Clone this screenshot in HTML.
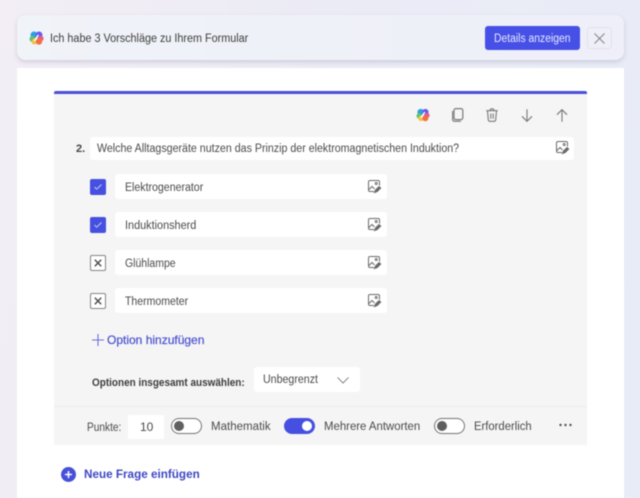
<!DOCTYPE html>
<html lang="de">
<head>
<meta charset="utf-8">
<title>Formular</title>
<style>
html,body{margin:0;padding:0}
body{width:640px;height:498px;overflow:hidden;position:relative;font-family:"Liberation Sans",sans-serif;color:#4a4a4a;background:linear-gradient(100deg,#f3eef5 0%,#ebebf5 45%,#e8ecf7 100%)}
#wrap{position:absolute;inset:0;filter:blur(.4px)}
.a{position:absolute}
.t{position:absolute;white-space:nowrap;font-size:11.5px;line-height:16px;transform-origin:0 50%}
.w{position:absolute;background:#fff;border-radius:3px}
.cb{position:absolute;left:90px;width:16px;height:16px;border-radius:2px;box-sizing:border-box}
.on{background:#4650e0}
.off{background:#fff;border:1px solid #858585}
.tg{position:absolute;width:31px;height:16px;border-radius:8px;box-sizing:border-box;border:1px solid #757575;background:#fff}
.tg i{position:absolute;left:2px;top:2px;width:10px;height:10px;border-radius:50%;background:#5f5f5f}
.tg.y{background:#4650e0;border-color:#4650e0}
.tg.y i{left:17px;background:#fff}
svg{position:absolute;overflow:visible}
</style>
</head>
<body>
<div id="wrap">
<div class="a" style="left:17px;top:15px;width:607px;height:45px;border-radius:9px;background:linear-gradient(90deg,#f0f3f8,#eeeff8);box-shadow:0 2px 5px rgba(90,90,130,.22)"></div>
<div class="a" style="left:17px;top:68px;width:607px;height:430px;background:#fff"></div>
<div class="a" style="left:54px;top:91px;width:533px;height:354px;background:#f5f5f5"></div>
<div class="a" style="left:54px;top:90.5px;width:533px;height:3px;background:#4a50d8;border-radius:2px 2px 0 0"></div>
<div class="a" style="left:54px;top:406px;width:533px;height:1px;background:#ebebeb"></div>

<svg style="left:29px;top:31px" width="15" height="14" viewBox="0 0 15 14"><circle cx="5" cy="4" r="3.500" fill="#2aa0e6"/><circle cx="10" cy="4" r="3.500" fill="#6a5ce8"/><circle cx="3.500" cy="8" r="3" fill="#5cc46a"/><circle cx="5.500" cy="10.500" r="3" fill="#f3c04a"/><circle cx="12" cy="7.500" r="2.600" fill="#e85a8a"/><circle cx="10" cy="10.500" r="3.200" fill="#f2703f"/><path d="M5.800 9.500L9 4.500" stroke="#fff" stroke-width="1.600" stroke-linecap="round"/></svg>
<div class="t" style="left:50px;top:31px;color:#3c3c3c;transform:scaleX(.94)">Ich habe 3 Vorschläge zu Ihrem Formular</div>

<div class="a" style="left:485px;top:26px;width:95px;height:24px;background:#4650e6;border-radius:3px"></div>
<div class="t" style="left:494px;top:31px;color:#e8eafc;transform:scaleX(.9)">Details anzeigen</div>
<div class="a" style="left:587px;top:27px;width:25px;height:22px;box-sizing:border-box;border:1px solid #e2e2ea;border-radius:3px"></div>
<svg style="left:594px;top:33px" width="11" height="11" viewBox="0 0 11 11"><path d="M.5.500l10 10M10.500.500l-10 10" stroke="#858585" stroke-width="1" fill="none"/></svg>

<svg style="left:416px;top:108px" width="14" height="14" viewBox="0 0 15 14"><circle cx="5" cy="4" r="3.500" fill="#2aa0e6"/><circle cx="10" cy="4" r="3.500" fill="#6a5ce8"/><circle cx="3.500" cy="8" r="3" fill="#5cc46a"/><circle cx="5.500" cy="10.500" r="3" fill="#f3c04a"/><circle cx="12" cy="7.500" r="2.600" fill="#e85a8a"/><circle cx="10" cy="10.500" r="3.200" fill="#f2703f"/><path d="M5.800 9.500L9 4.500" stroke="#fff" stroke-width="1.600" stroke-linecap="round"/></svg>
<svg style="left:452px;top:108px" width="12" height="14" viewBox="0 0 12 14" fill="none" stroke="#7a7a7a" stroke-width="1.200"><rect x="2" y=".6" width="8.800" height="11" rx="1.800"/><path d="M.6 3v8c0 1.500 1 2.300 2.300 2.300h6"/></svg>
<svg style="left:486px;top:108px" width="12" height="14" viewBox="0 0 12 14" fill="none" stroke="#7a7a7a" stroke-width="1.100"><path d="M.3 2.700h11.400M4 2.500C4 .2 8 .2 8 2.500M1.500 2.800l.8 9c.1.900.6 1.500 1.500 1.500h4.400c.9 0 1.400-.6 1.500-1.500l.8-9M4.800 5.500v5.200M7.200 5.500v5.200"/></svg>
<svg style="left:521px;top:109px" width="12" height="13" viewBox="0 0 12 13" fill="none" stroke="#7a7a7a" stroke-width="1.100"><path d="M6 .3v12M1 7.300l5 5 5-5"/></svg>
<svg style="left:556px;top:109px" width="12" height="13" viewBox="0 0 12 13" fill="none" stroke="#7a7a7a" stroke-width="1.100"><path d="M6 12.700V.7M1 5.700l5-5 5 5"/></svg>

<div class="t" style="left:76px;top:141px;font-weight:bold;font-size:11px;color:#444">2.</div>
<div class="w" style="left:90px;top:137px;width:484px;height:23px"></div>
<div class="t" style="left:97px;top:141px;transform:scaleX(.926)">Welche Alltagsgeräte nutzen das Prinzip der elektromagnetischen Induktion?</div>
<svg style="left:556px;top:141px" width="13" height="13" viewBox="0 0 13 13" fill="none" stroke="#6a6a6a" stroke-width="1"><path d="M6 11.500H2c-.9 0-1.500-.6-1.500-1.500V2C.5 1.100 1.100.5 2 .5h8c.9 0 1.500.6 1.500 1.500v3.500M1 9.500l3-3 2.500 2.500"/><circle cx="8.200" cy="3.500" r="1"/><path d="M6.500 12.500l1-2.500 3.500-3.500 1.700 1.500-3.500 3.600z" fill="#6a6a6a"/></svg>

<div class="cb on" style="top:179px"></div>
<svg style="left:94px;top:184px" width="8" height="6" viewBox="0 0 8 6"><path d="M.5 3l2.200 2.200L7.500.5" stroke="#c4c8f6" fill="none" stroke-width="1"/></svg>
<div class="w" style="left:115px;top:174px;width:272px;height:25px"></div>
<div class="t" style="left:125px;top:180px;transform:scaleX(.92)">Elektrogenerator</div>
<svg style="left:368px;top:180px" width="13" height="13" viewBox="0 0 13 13" fill="none" stroke="#6a6a6a" stroke-width="1"><path d="M6 11.500H2c-.9 0-1.500-.6-1.500-1.500V2C.5 1.100 1.100.5 2 .5h8c.9 0 1.500.6 1.500 1.500v3.500M1 9.500l3-3 2.500 2.500"/><circle cx="8.200" cy="3.500" r="1"/><path d="M6.500 12.500l1-2.500 3.500-3.500 1.700 1.500-3.500 3.600z" fill="#6a6a6a"/></svg>

<div class="cb on" style="top:217px"></div>
<svg style="left:94px;top:222px" width="8" height="6" viewBox="0 0 8 6"><path d="M.5 3l2.200 2.200L7.500.5" stroke="#c4c8f6" fill="none" stroke-width="1"/></svg>
<div class="w" style="left:115px;top:212px;width:272px;height:25px"></div>
<div class="t" style="left:125px;top:218px;transform:scaleX(.945)">Induktionsherd</div>
<svg style="left:368px;top:218px" width="13" height="13" viewBox="0 0 13 13" fill="none" stroke="#6a6a6a" stroke-width="1"><path d="M6 11.500H2c-.9 0-1.500-.6-1.500-1.500V2C.5 1.100 1.100.5 2 .5h8c.9 0 1.500.6 1.500 1.500v3.500M1 9.500l3-3 2.500 2.500"/><circle cx="8.200" cy="3.500" r="1"/><path d="M6.500 12.500l1-2.500 3.500-3.500 1.700 1.500-3.500 3.600z" fill="#6a6a6a"/></svg>

<div class="cb off" style="top:255px"></div>
<svg style="left:94px;top:259px" width="8" height="8" viewBox="0 0 8 8"><path d="M.8.800l6.400 6.400M7.200.800L.8 7.200" stroke="#4a4a4a" fill="none" stroke-width="1.400"/></svg>
<div class="w" style="left:115px;top:250px;width:272px;height:25px"></div>
<div class="t" style="left:125px;top:256px;transform:scaleX(.91)">Glühlampe</div>
<svg style="left:368px;top:256px" width="13" height="13" viewBox="0 0 13 13" fill="none" stroke="#6a6a6a" stroke-width="1"><path d="M6 11.500H2c-.9 0-1.500-.6-1.500-1.500V2C.5 1.100 1.100.5 2 .5h8c.9 0 1.500.6 1.500 1.500v3.500M1 9.500l3-3 2.500 2.500"/><circle cx="8.200" cy="3.500" r="1"/><path d="M6.500 12.500l1-2.500 3.500-3.500 1.700 1.500-3.500 3.600z" fill="#6a6a6a"/></svg>

<div class="cb off" style="top:293px"></div>
<svg style="left:94px;top:297px" width="8" height="8" viewBox="0 0 8 8"><path d="M.8.800l6.400 6.400M7.200.800L.8 7.200" stroke="#4a4a4a" fill="none" stroke-width="1.400"/></svg>
<div class="w" style="left:115px;top:288px;width:272px;height:25px"></div>
<div class="t" style="left:125px;top:294px;transform:scaleX(.915)">Thermometer</div>
<svg style="left:368px;top:294px" width="13" height="13" viewBox="0 0 13 13" fill="none" stroke="#6a6a6a" stroke-width="1"><path d="M6 11.500H2c-.9 0-1.500-.6-1.500-1.500V2C.5 1.100 1.100.5 2 .5h8c.9 0 1.500.6 1.500 1.500v3.500M1 9.500l3-3 2.500 2.500"/><circle cx="8.200" cy="3.500" r="1"/><path d="M6.500 12.500l1-2.500 3.500-3.500 1.700 1.500-3.500 3.600z" fill="#6a6a6a"/></svg>

<svg style="left:92px;top:334px" width="12" height="12" viewBox="0 0 12 12"><path d="M6 0v12M0 6h12" stroke="#6a70d8" stroke-width="1.100" fill="none"/></svg>
<div class="t" style="left:107px;top:332px;color:#4a50d0;font-size:12px;-webkit-text-stroke:.2px #4a50d0">Option hinzufügen</div>

<div class="t" style="left:92px;top:375px;font-weight:bold;font-size:11px;color:#3c3c3c;transform:scaleX(.905)">Optionen insgesamt auswählen:</div>
<div class="w" style="left:254px;top:367px;width:106px;height:25px"></div>
<div class="t" style="left:263px;top:372px;transform:scaleX(.925)">Unbegrenzt</div>
<svg style="left:337px;top:377px" width="12" height="7" viewBox="0 0 12 7"><path d="M.5.500L6 6l5.500-5.500" stroke="#888" fill="none" stroke-width="1"/></svg>

<div class="t" style="left:87px;top:420px;transform:scaleX(.88)">Punkte:</div>
<div class="w" style="left:128px;top:415px;width:36px;height:24px;border-radius:1px"></div>
<div class="t" style="left:140px;top:419px;font-size:12px">10</div>
<div class="tg" style="left:171px;top:418px"><i></i></div>
<div class="t" style="left:211px;top:419px;letter-spacing:.02px">Mathematik</div>
<div class="tg y" style="left:284px;top:418px"><i></i></div>
<div class="t" style="left:324px;top:419px;transform:scaleX(.99)">Mehrere Antworten</div>
<div class="tg" style="left:434px;top:418px"><i></i></div>
<div class="t" style="left:474px;top:419px;transform:scaleX(.98)">Erforderlich</div>
<svg style="left:559px;top:423px" width="13" height="4" viewBox="0 0 13 4"><circle cx="1.500" cy="2" r="1.200" fill="#555"/><circle cx="6.500" cy="2" r="1.200" fill="#555"/><circle cx="11.500" cy="2" r="1.200" fill="#555"/></svg>

<svg style="left:61px;top:467px" width="15" height="15" viewBox="0 0 15 15"><circle cx="7.500" cy="7.500" r="7.500" fill="#4650d8"/><path d="M7.500 4v7M4 7.500h7" stroke="#fff" stroke-width="1.500"/></svg>
<div class="t" style="left:84px;top:466px;color:#3f47c4;font-size:12px;font-weight:bold;transform:scaleX(.975)">Neue Frage einfügen</div>
</div>
</body>
</html>
